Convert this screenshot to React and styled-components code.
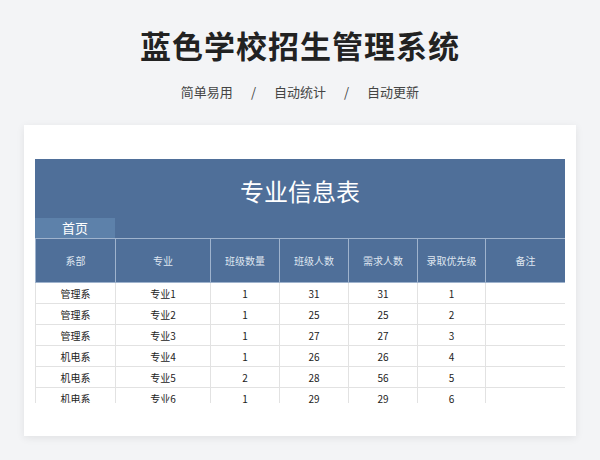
import React from "react";
import styled, { createGlobalStyle } from "styled-components";

const G = createGlobalStyle`
  body { margin:0; background:#f3f4f6; font-family:"Noto Sans CJK SC","Noto Sans",sans-serif; }
`;
const Page = styled.div`width:600px;height:460px;display:flex;flex-direction:column;align-items:center;`;
const Title = styled.h1`margin:23px 0 0;height:44px;font-size:31px;font-weight:700;color:#222;letter-spacing:1px;line-height:44px;`;
const Sub = styled.div`margin-top:15px;height:20px;font-size:13px;color:#444;display:flex;gap:18px;line-height:20px;`;
const Card = styled.div`margin-top:23px;width:552px;height:311px;background:#fff;box-shadow:0 2px 8px rgba(0,0,0,0.08);padding:34px 11px 0;box-sizing:border-box;`;
const Clip = styled.div`height:244px;overflow:hidden;`;
const Band = styled.div`background:#4f6f99;height:79px;display:flex;flex-direction:column;`;
const BandTitle = styled.div`flex:1;display:flex;align-items:center;justify-content:center;color:#fff;font-size:24px;font-family:"Noto Sans CJK SC",serif;padding-top:4px;`;
const Tab = styled.div`width:80px;height:20px;background:#5d81aa;color:#fff;font-size:13px;text-align:center;line-height:20px;`;
const Table = styled.table`width:530px;border-collapse:collapse;table-layout:fixed;font-size:10px;color:#222;`;
const Th = styled.th`background:#4f6f99;color:#dfe6f0;font-weight:400;height:41px;border:1px solid #9fb3cd;`;
const Td = styled.td`height:20px;text-align:center;border:1px solid #e2e2e2;padding:0;`;

const cols = [80,95,69,69,69,68,80];
const heads = ["系部","专业","班级数量","班级人数","需求人数","录取优先级","备注"];
const rows = [
  ["管理系","专业1",1,31,31,1],["管理系","专业2",1,25,25,2],["管理系","专业3",1,27,27,3],
  ["机电系","专业4",1,26,26,4],["机电系","专业5",2,28,56,5],["机电系","专业6",1,29,29,6],
];

export default function App(){
  return <Page><G/>
    <Title>蓝色学校招生管理系统</Title>
    <Sub><span>简单易用</span><span>/</span><span>自动统计</span><span>/</span><span>自动更新</span></Sub>
    <Card><Clip>
      <Band><BandTitle>专业信息表</BandTitle><Tab>首页</Tab></Band>
      <Table>
        <colgroup>{cols.map((w,i)=><col key={i} style={{width:w}}/>)}</colgroup>
        <thead><tr>{heads.map(h=><Th key={h}>{h}</Th>)}</tr></thead>
        <tbody>{rows.map((r,i)=><tr key={i}>{r.map((c,j)=><Td key={j}>{c}</Td>)}<Td/></tr>)}</tbody>
      </Table>
    </Clip></Card>
  </Page>;
}
